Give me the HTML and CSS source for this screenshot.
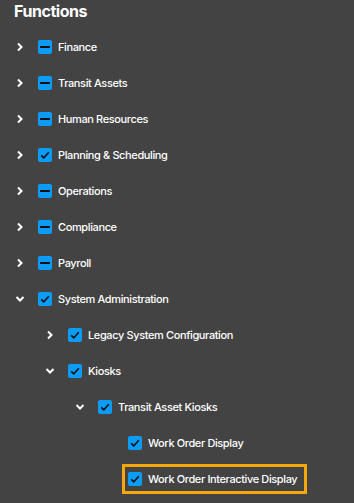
FILE: index.html
```html
<!DOCTYPE html>
<html lang="en">
<head>
    <meta charset="UTF-8">
    <title>Functions</title>
    <link rel="stylesheet" href="styles.css">
</head>
<body>
    <div class="panel">
        <h2 class="title">Functions</h2>
        <ul class="tree">
            <li><div class="row"><span class="toggle"><svg viewBox="0 0 8 10"><path d="M2 1.5 5.5 5 2 8.5"/></svg></span><span class="box partial"></span><span class="label">Finance</span></div></li>
            <li><div class="row"><span class="toggle"><svg viewBox="0 0 8 10"><path d="M2 1.5 5.5 5 2 8.5"/></svg></span><span class="box partial"></span><span class="label">Transit Assets</span></div></li>
            <li><div class="row"><span class="toggle"><svg viewBox="0 0 8 10"><path d="M2 1.5 5.5 5 2 8.5"/></svg></span><span class="box partial"></span><span class="label">Human Resources</span></div></li>
            <li><div class="row"><span class="toggle"><svg viewBox="0 0 8 10"><path d="M2 1.5 5.5 5 2 8.5"/></svg></span><span class="box checked"><svg viewBox="0 0 14 14"><path d="M3.2 7.3 5.8 9.8 10.8 4.3"/></svg></span><span class="label">Planning &amp; Scheduling</span></div></li>
            <li><div class="row"><span class="toggle"><svg viewBox="0 0 8 10"><path d="M2 1.5 5.5 5 2 8.5"/></svg></span><span class="box partial"></span><span class="label">Operations</span></div></li>
            <li><div class="row"><span class="toggle"><svg viewBox="0 0 8 10"><path d="M2 1.5 5.5 5 2 8.5"/></svg></span><span class="box partial"></span><span class="label">Compliance</span></div></li>
            <li><div class="row"><span class="toggle"><svg viewBox="0 0 8 10"><path d="M2 1.5 5.5 5 2 8.5"/></svg></span><span class="box partial"></span><span class="label">Payroll</span></div></li>
            <li>
                <div class="row"><span class="toggle"><svg class="down" viewBox="0 0 10 8"><path d="M1.5 2 5 5.5 8.5 2"/></svg></span><span class="box checked"><svg viewBox="0 0 14 14"><path d="M3.2 7.3 5.8 9.8 10.8 4.3"/></svg></span><span class="label">System Administration</span></div>
                <ul class="tree sub">
                    <li><div class="row"><span class="toggle"><svg viewBox="0 0 8 10"><path d="M2 1.5 5.5 5 2 8.5"/></svg></span><span class="box checked"><svg viewBox="0 0 14 14"><path d="M3.2 7.3 5.8 9.8 10.8 4.3"/></svg></span><span class="label">Legacy System Configuration</span></div></li>
                    <li>
                        <div class="row"><span class="toggle"><svg class="down" viewBox="0 0 10 8"><path d="M1.5 2 5 5.5 8.5 2"/></svg></span><span class="box checked"><svg viewBox="0 0 14 14"><path d="M3.2 7.3 5.8 9.8 10.8 4.3"/></svg></span><span class="label">Kiosks</span></div>
                        <ul class="tree sub">
                            <li>
                                <div class="row"><span class="toggle"><svg class="down" viewBox="0 0 10 8"><path d="M1.5 2 5 5.5 8.5 2"/></svg></span><span class="box checked"><svg viewBox="0 0 14 14"><path d="M3.2 7.3 5.8 9.8 10.8 4.3"/></svg></span><span class="label">Transit Asset Kiosks</span></div>
                                <ul class="tree sub">
                                    <li><div class="row"><span class="toggle"></span><span class="box checked"><svg viewBox="0 0 14 14"><path d="M3.2 7.3 5.8 9.8 10.8 4.3"/></svg></span><span class="label">Work Order Display</span></div></li>
                                    <li><div class="row"><span class="toggle"></span><span class="highlight"><span class="box checked"><svg viewBox="0 0 14 14"><path d="M3.2 7.3 5.8 9.8 10.8 4.3"/></svg></span><span class="label">Work Order Interactive Display</span></span></div></li>
                                </ul>
                            </li>
                        </ul>
                    </li>
                </ul>
            </li>
        </ul>
    </div>
</body>
</html>
```

FILE: styles.css
```css
body {
    margin: 0;
    background: #434343;
    font-family: Inter, "Noto Sans", sans-serif;
    color: #fff;
}

.panel {
    height: 503px;
    overflow: hidden;
}

.title {
    margin: 0;
    padding: 1px 0 0 14px;
    height: 28px;
    font-size: 16px;
    font-weight: 700;
    line-height: 20px;
    letter-spacing: -0.45px;
}

.tree {
    list-style: none;
    margin: 0;
    padding: 0;
}

.tree.sub {
    padding-left: 30px;
}

.row {
    display: flex;
    align-items: center;
    height: 36px;
    padding-left: 14px;
}

.toggle {
    width: 12px;
    height: 12px;
    margin-right: 12px;
    display: flex;
    align-items: center;
    justify-content: center;
}

.toggle svg {
    width: 8px;
    height: 10px;
    fill: none;
    stroke: #fff;
    stroke-width: 2;
}

.toggle svg.down {
    width: 10px;
    height: 8px;
}

.box {
    width: 14px;
    height: 14px;
    border-radius: 2px;
    background: #0b9cf6;
    margin-right: 6px;
    display: flex;
    align-items: center;
    justify-content: center;
    flex-shrink: 0;
}

.box.partial::after {
    content: "";
    width: 10px;
    height: 2px;
    background: #111;
}

.box svg {
    width: 14px;
    height: 14px;
    fill: none;
    stroke: #111;
    stroke-width: 1.6;
}

.label {
    font-size: 11px;
    font-weight: 500;
    letter-spacing: -0.38px;
    white-space: nowrap;
}

.highlight {
    display: flex;
    align-items: center;
    margin-left: -6px;
    padding: 5px 7px 5px 3px;
    border: 3px solid #f5a70c;
}
```
